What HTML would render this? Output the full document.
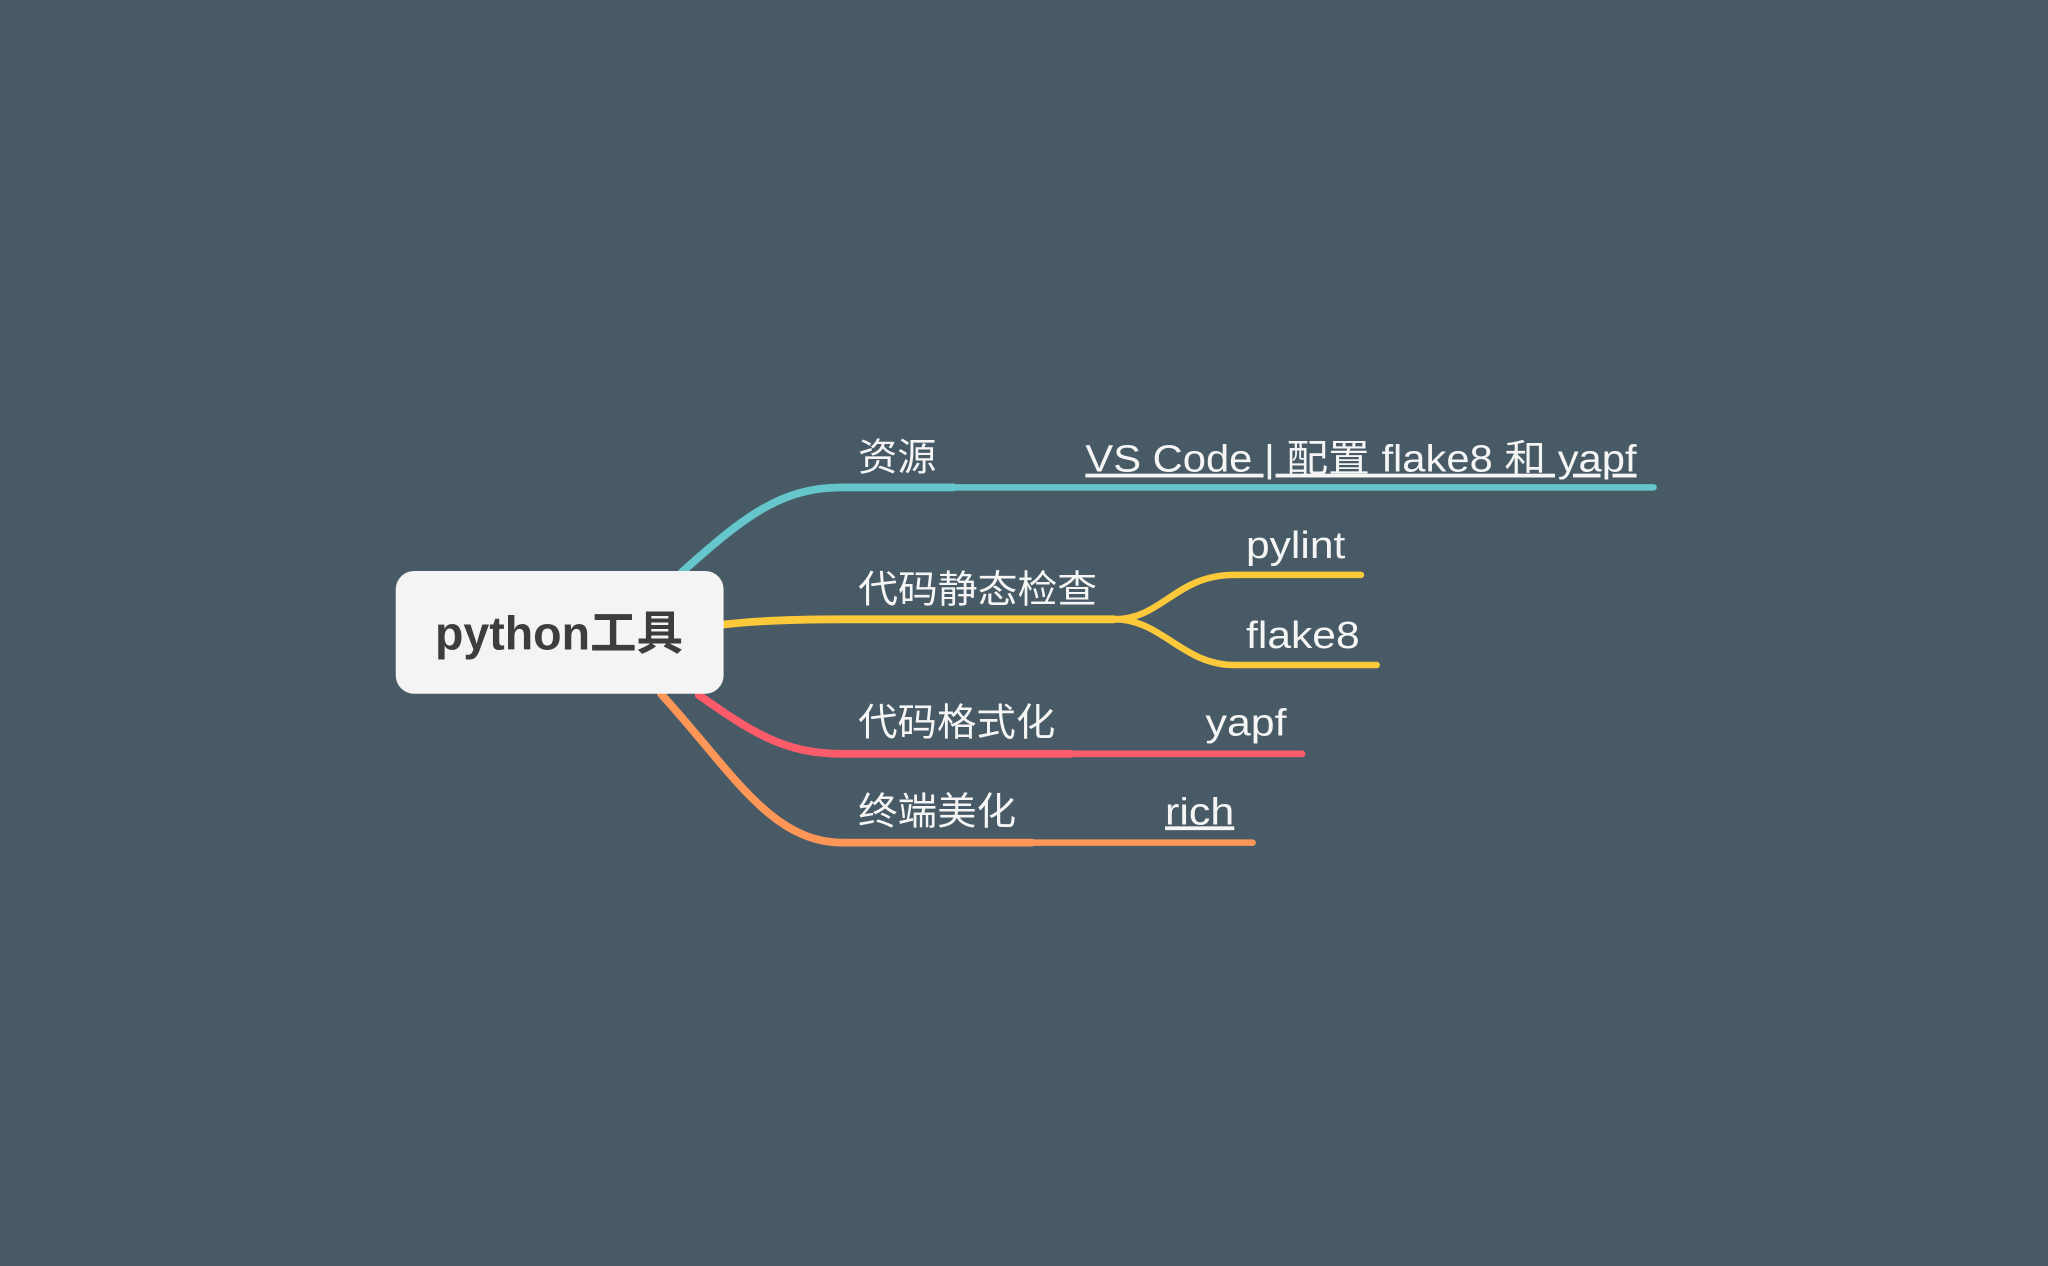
<!DOCTYPE html>
<html><head><meta charset="utf-8"><style>
html,body{margin:0;padding:0;background:#475a65;}
svg{display:block}
text{font-family:"Liberation Sans","Noto Sans CJK SC",sans-serif;fill:#f5f5f5;}
</style></head><body>
<svg width="2048" height="1266" viewBox="0 0 1568 969" xmlns="http://www.w3.org/2000/svg">
<rect width="1568" height="969" fill="#475a65"/>
<g fill="none" stroke-linecap="round">
<path d="M522 438 C570 395 598 373 645 373 L730 373" stroke="#65c7cb" stroke-width="6"/>
<path d="M730 373 L1266 373" stroke="#65c7cb" stroke-width="5"/>
<path d="M554 478 C580 475 610 474 645 474 L853 474" stroke="#fcc93b" stroke-width="6"/>
<path d="M853 474 C890 474 900 440 945 440 L1042 440" stroke="#fcc93b" stroke-width="5"/>
<path d="M853 474 C890 474 905 509 945 509 L1054 509" stroke="#fcc93b" stroke-width="5"/>
<path d="M535 532 C575 560 600 577 645 577 L820 577" stroke="#fc5c6a" stroke-width="6"/>
<path d="M820 577 L997 577" stroke="#fc5c6a" stroke-width="5"/>
<path d="M506 531 C560 590 590 645 645 645 L790 645" stroke="#fe9657" stroke-width="6"/>
<path d="M790 645 L959 645" stroke="#fe9657" stroke-width="5"/>
</g>
<rect x="303" y="437" width="251" height="94" rx="14" fill="#f4f4f4"/>
<text x="333" y="497" font-size="36" font-weight="bold" textLength="190" lengthAdjust="spacingAndGlyphs" style="fill:#3d3d3d">python工具</text>
<text x="657" y="360" font-size="29" textLength="60" lengthAdjust="spacingAndGlyphs">资源</text>
<text x="831" y="361" font-size="29" text-decoration="underline" textLength="422" lengthAdjust="spacingAndGlyphs">VS Code | 配置 flake8 和 yapf</text>
<text x="657" y="461" font-size="29" textLength="183" lengthAdjust="spacingAndGlyphs">代码静态检查</text>
<text x="954" y="427" font-size="29" textLength="76" lengthAdjust="spacingAndGlyphs">pylint</text>
<text x="954" y="496" font-size="29" textLength="87" lengthAdjust="spacingAndGlyphs">flake8</text>
<text x="657" y="563" font-size="29" textLength="151" lengthAdjust="spacingAndGlyphs">代码格式化</text>
<text x="923" y="563" font-size="29" textLength="62" lengthAdjust="spacingAndGlyphs">yapf</text>
<text x="657" y="631" font-size="29" textLength="121" lengthAdjust="spacingAndGlyphs">终端美化</text>
<text x="892" y="631" font-size="29" text-decoration="underline" textLength="53" lengthAdjust="spacingAndGlyphs">rich</text>
</svg>
</body></html>
